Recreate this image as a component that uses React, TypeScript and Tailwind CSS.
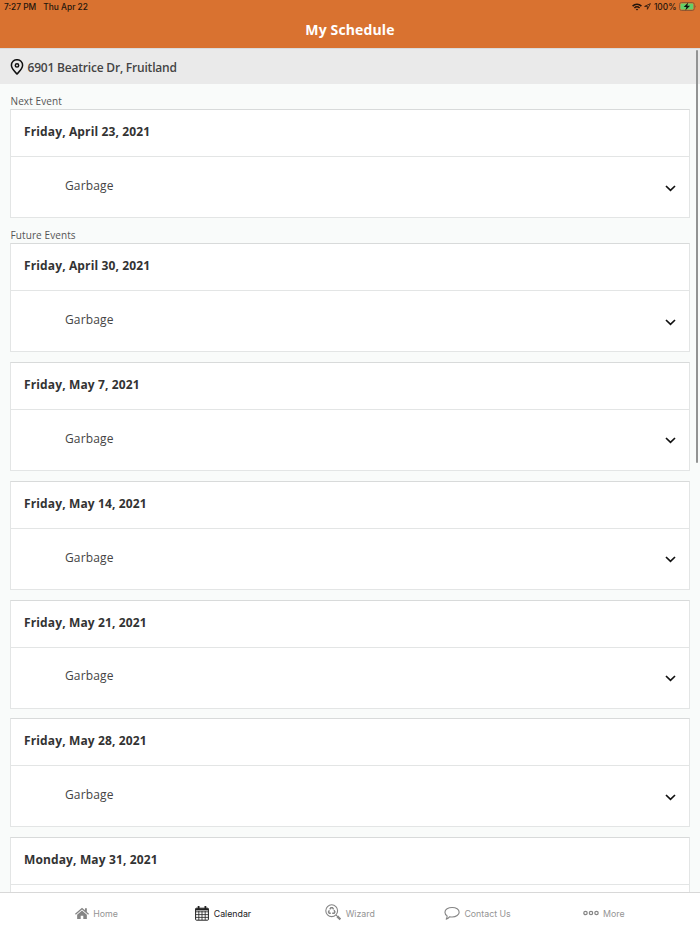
import React from "react";
import clsx from "clsx";

const futureEvents = [
  "Friday, April 30, 2021",
  "Friday, May 7, 2021",
  "Friday, May 14, 2021",
  "Friday, May 21, 2021",
  "Friday, May 28, 2021",
  "Monday, May 31, 2021",
];

const App: React.FC = () => {
  return (
    <div className="relative flex flex-col w-full h-screen overflow-hidden bg-[#f9fbfa] font-['Open_Sans',sans-serif] text-[#333]">
      <header className="h-12 shrink-0 bg-[#d97230]">
        <StatusBar />
        <h1 className="text-center text-white text-[14px] leading-5 font-bold pt-[6px] tracking-[0.15px]">
          My Schedule
        </h1>
      </header>
      <div className="flex items-center h-9 shrink-0 pl-[10px] gap-[3.5px] bg-[#eaeaea] border-t border-[#d9dbdc]">
        <PinIcon />
        <span className="text-[12px] font-semibold text-[#444] pt-[2px] tracking-[-0.2px]">
          6901 Beatrice Dr, Fruitland
        </span>
      </div>
      <main className="flex-1 min-h-0 overflow-hidden px-[10px] pt-[9px]">
        <SectionLabel>Next Event</SectionLabel>
        <EventCard date="Friday, April 23, 2021" />
        <SectionLabel>Future Events</SectionLabel>
        {futureEvents.map((date) => (
          <EventCard key={date} date={date} />
        ))}
      </main>
      <nav className="grid grid-cols-5 h-[42px] shrink-0 px-[33px] bg-white border-t border-[#d8d8d8]">
        <Tab label="Home" icon={<HomeIcon />} />
        <Tab label="Calendar" icon={<CalendarIcon />} active />
        <Tab label="Wizard" icon={<WizardIcon />} />
        <Tab label="Contact Us" icon={<ChatIcon />} />
        <Tab label="More" icon={<MoreIcon />} />
      </nav>
      {/* scroll indicator */}
      <div className="absolute right-[2px] top-[50px] w-[2px] h-[413px] rounded-full bg-[#929393]" />
    </div>
  );
};

export default App;

const StatusBar: React.FC = () => (
  <div className="flex items-center justify-between h-[14px] pl-[4px] pr-[3px] font-[Inter,sans-serif] text-[8.4px] font-medium text-[#24150c]">
    <div className="flex gap-[7px]">
      <span>7:27 PM</span>
      <span>Thu Apr 22</span>
    </div>
    <div className="flex items-center gap-[2.5px]">
      <svg width="10" height="8" viewBox="0 0 10 8" fill="none" stroke="currentColor" strokeWidth="1.6">
        <path d="M.6 3.1a6.3 6.3 0 0 1 8.8 0M2.4 5a3.8 3.8 0 0 1 5.2 0" />
        <path d="M5 7.5 3.8 6.2a1.8 1.8 0 0 1 2.4 0z" fill="currentColor" stroke="none" />
      </svg>
      <svg width="7" height="7" viewBox="0 0 7 7" fill="none" stroke="currentColor" strokeWidth=".8" strokeLinejoin="round">
        <path d="M6.4.6.6 3.4h2.8v2.9z" />
      </svg>
      <span>100%</span>
      <svg width="18" height="9" viewBox="0 0 18 9">
        <rect x=".5" y=".5" width="14.8" height="8" rx="2" fill="none" stroke="#805132" strokeWidth=".8" />
        <rect x="1.5" y="1.5" width="12.8" height="6" rx="1" fill="#64cf68" />
        <path d="M16.2 3.2q1.4 1.3 0 2.6z" fill="#805132" />
        <path d="M9.2.6 4.7 5.1h2.7L6.3 8.5l4.8-4.7H8.3z" fill="#111" />
      </svg>
    </div>
  </div>
);

const SectionLabel: React.FC<{ children: React.ReactNode }> = ({ children }) => (
  <h2 className="h-4 pl-[0.5px] text-[10px] leading-4 tracking-[0.1px] text-[#555]">
    {children}
  </h2>
);

const EventCard: React.FC<{ date: string }> = ({ date }) => (
  <section className="h-[109px] mb-[9.85px] bg-white border border-[#e3e5e5] border-t-[#d8dada] first-of-type:mb-[9px]">
    <h3 className="h-[47px] pl-[13px] pt-[12px] text-[12px] leading-5 font-bold tracking-[0.13px] border-b border-[#e3e5e5]">
      {date}
    </h3>
    <div className="flex items-center justify-between h-[60px] pl-[54px] pr-[13.5px]">
      <span className="text-[12px] leading-5 tracking-[0.15px] text-[#444] pb-[2.1px]">
        Garbage
      </span>
      <svg width="11" height="7" viewBox="0 0 11 7" fill="none" stroke="#111" strokeWidth="1.7" className="mt-[2px]">
        <path d="m1 1 4.5 4.3L10 1" />
      </svg>
    </div>
  </section>
);

interface TabProps {
  label: string;
  icon: React.ReactNode;
  active?: boolean;
}

const Tab: React.FC<TabProps> = ({ label, icon, active }) => (
  <a
    className={clsx(
      "flex items-center justify-center gap-[4.5px] font-[Inter,sans-serif] text-[8.8px]",
      active ? "text-[#222]" : "text-[#949494]",
    )}
  >
    {icon}
    <span>{label}</span>
  </a>
);

const PinIcon: React.FC = () => (
  <svg width="14" height="16" viewBox="0 0 14 16" fill="none" stroke="#111" strokeWidth="1.5">
    <path d="M7 15C4.6 12.5 1.4 9.7 1.4 6.3a5.6 5.6 0 0 1 11.2 0C12.6 9.7 9.4 12.5 7 15z" />
    <circle cx="7" cy="6.4" r="1.7" />
  </svg>
);

const HomeIcon: React.FC = () => (
  <svg width="14" height="13" viewBox="0 0 15 13" fill="#858585">
    <path d="M7.5.3 0 6.8l.9 1 6.6-5.6 6.6 5.6.9-1-2.3-2V1h-2v2z" />
    <path d="M7.5 3.3 2.3 7.8v4.6h3.8V8.8h2.8v3.6h3.8V7.8z" />
  </svg>
);

const CalendarIcon: React.FC = () => (
  <svg width="14" height="15" viewBox="0 0 14 15" fill="none" stroke="#222">
    <rect x=".6" y="2.2" width="12.8" height="12" rx=".8" strokeWidth="1" />
    <path d="M.6 3.4h12.8" strokeWidth="2" />
    <path d="M3.6 0v3.5M10.4 0v3.5" strokeWidth="1.8" />
    <path d="M3.8 5v9M7 5v9M10.2 5v9M.6 5.8h12.8M.6 8.6h12.8M.6 11.4h12.8" strokeWidth=".8" />
  </svg>
);

const WizardIcon: React.FC = () => (
  <svg width="16" height="17" viewBox="0 0 16 17" fill="none" stroke="#858585" className="mb-[2px]">
    <circle cx="6.7" cy="6.7" r="5.9" strokeWidth="1.1" />
    <path d="m4.8 5.4 1.1-1.7h1.6l1.1 1.7M9 6.2l.9 1.7-.8 1.4H7.2M5.8 9.3H4.3l-.8-1.4.9-1.6" strokeWidth="1.4" />
    <path d="m11 11 1.3 1.3" strokeWidth="1" />
    <path d="m12.1 12.1 3.3 3.3" strokeWidth="2.2" />
  </svg>
);

const ChatIcon: React.FC = () => (
  <svg width="16" height="15" viewBox="0 0 17 15" fill="none" stroke="#858585" strokeWidth="1.2" strokeLinejoin="round" className="ml-px">
    <path d="M8.7 1.1c4.2 0 7.4 2.2 7.4 5s-3.2 5.1-7.4 5.1c-.9 0-1.8-.1-2.6-.3-1 1.4-2.1 2.3-3.8 2.7.7-1 1.1-2.1 1-3.6C2 9.1 1 7.7 1 6.1c0-2.8 3.5-5 7.7-5z" />
  </svg>
);

const MoreIcon: React.FC = () => (
  <svg width="16" height="6" viewBox="0 0 16 6" fill="none" stroke="#858585" strokeWidth="1.2" className="mb-[2px]">
    <circle cx="2.5" cy="3" r="1.7" />
    <circle cx="8" cy="3" r="1.7" />
    <circle cx="13.5" cy="3" r="1.7" />
  </svg>
);
